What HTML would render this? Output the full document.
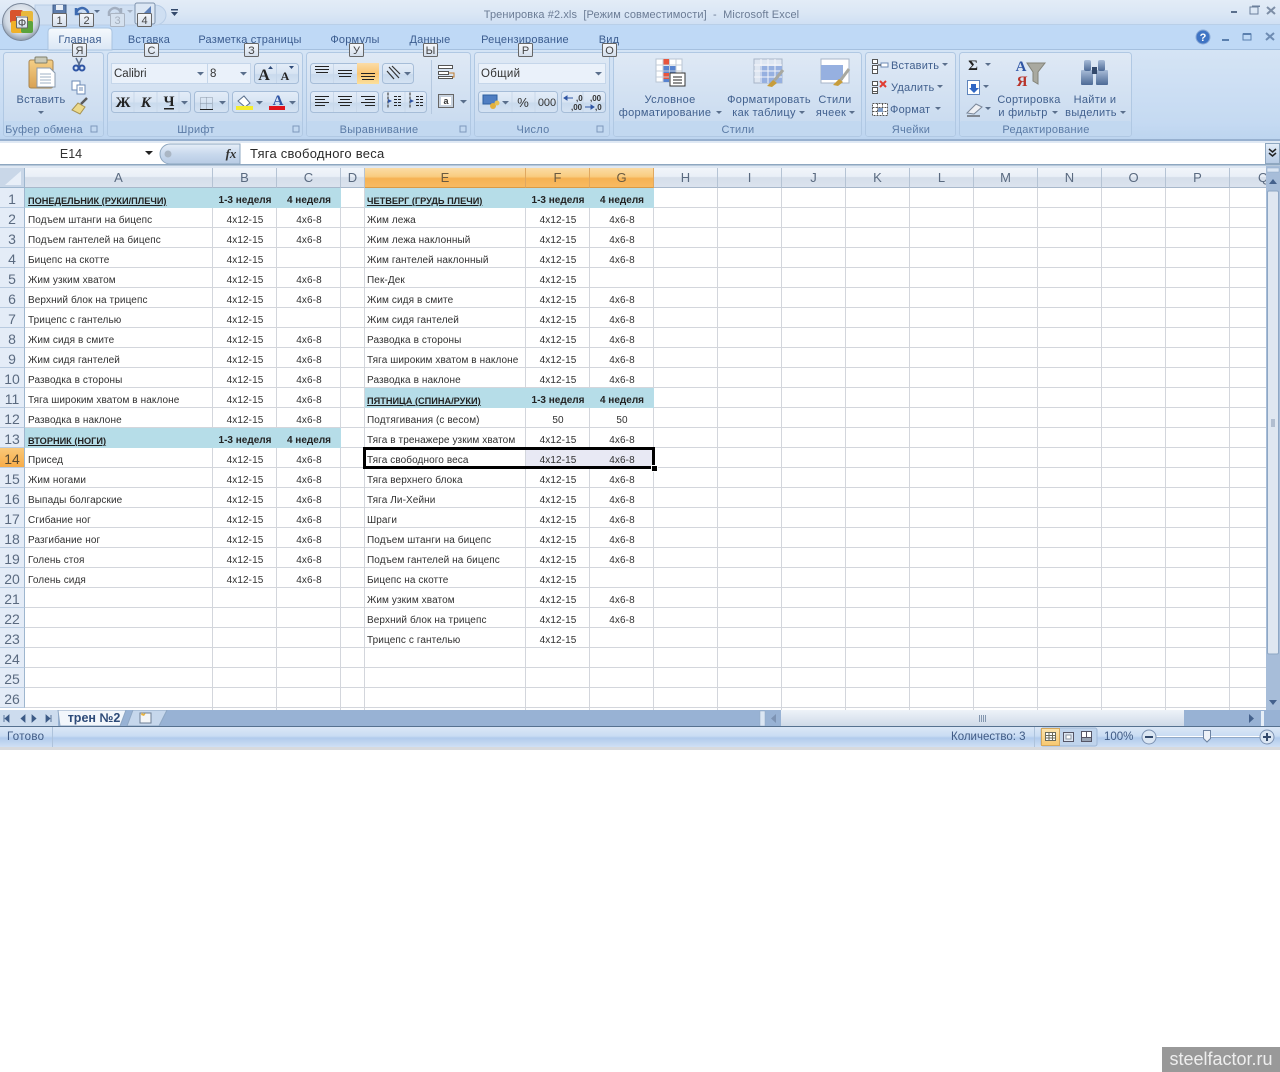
<!DOCTYPE html>
<html lang="ru"><head><meta charset="utf-8"><title>Тренировка #2.xls</title>
<style>
html,body{margin:0;padding:0;background:#fff;width:1280px;height:1072px;overflow:hidden;font-family:"Liberation Sans",sans-serif}
#rib{position:absolute;left:0;top:0}
#rib text{font-family:"Liberation Sans",sans-serif;font-size:11px;fill:#3a5683}
#rib .c{text-anchor:middle}
#rib .cap{font-size:11px;fill:#5b7ba6;text-anchor:middle;letter-spacing:.25px}
#rib .tab{font-size:11px;fill:#3b5c8f;text-anchor:middle;letter-spacing:.2px}
#rib .lab{font-size:11px;fill:#41608e;text-anchor:middle;letter-spacing:.3px}
#rib .k{font-size:11px;fill:#444;text-anchor:middle}
#rib .b{font-family:"Liberation Serif",serif;font-weight:bold;font-size:15px;fill:#222;text-anchor:middle}
.abs{position:absolute}
#grid{position:absolute;left:25px;top:188px;width:1241px;height:522px;background:#fff;overflow:hidden}
.v{position:absolute;top:0;bottom:0;width:1px;background:#d3d6dc}
.hl{position:absolute;left:0;right:0;top:0;bottom:0;background:repeating-linear-gradient(to bottom,transparent 0,transparent 19px,#d3d6dc 19px,#d3d6dc 20px)}
table{position:absolute;left:0;top:0;border-collapse:separate;border-spacing:0;table-layout:fixed;width:629px}
td{height:14px;padding:6px 0 0;font-size:10px;line-height:14px;letter-spacing:.1px;color:#303030;white-space:nowrap;overflow:visible;text-align:center}
td:nth-child(1){text-align:left;padding-left:3px}
td:nth-child(5){text-align:left;padding-left:2px}
td.h{background:#b6dde8;font-weight:bold;color:#222;letter-spacing:0}
td.u{text-decoration:underline;font-size:9.2px}
td.s{background:#e8e9f4}
.ch{position:absolute;top:168px;height:20px;line-height:20px;text-align:center;font-size:13px;color:#5a6a80;background:linear-gradient(#f1f5fa,#e9eff7 45%,#d5deea 50%,#dbe3ee);border-right:1px solid #b5c3d4;border-bottom:1px solid #a8b8cb;overflow:hidden;box-sizing:border-box}
.ch.o{background:linear-gradient(#fbdca6,#f9cc80 45%,#f6b253 55%,#f8ba62);color:#6a5a40;border-right-color:#e0a860;border-bottom-color:#d99a46}
.rh{position:absolute;left:0;width:25px;height:20px;margin-top:-1px;line-height:22px;text-align:center;font-size:14px;color:#5a6a80;background:#e4ecf7;border-right:1px solid #9eb6ce;border-bottom:1px solid #b9cbe0;box-sizing:border-box}
.rh.o{background:linear-gradient(#f9c878,#f7ac48);color:#5a4a30}
#sel{position:absolute;left:363px;top:447px;width:286px;height:16px;border:3px solid #000;pointer-events:none}
#han{position:absolute;left:651px;top:465px;width:5px;height:5px;background:#000;border:1px solid #fff}
#wm{position:absolute;left:1162px;top:1047px;width:118px;height:25px;background:#999;color:#eee;font-size:18px;line-height:25px;text-align:center}
</style></head><body>

<svg id="rib" width="1280" height="168" viewBox="0 0 1280 168" xmlns="http://www.w3.org/2000/svg">
<defs>
<linearGradient id="gT" x1="0" y1="0" x2="0" y2="1"><stop offset="0" stop-color="#e3ecf7"/><stop offset=".5" stop-color="#dbe7f5"/><stop offset="1" stop-color="#cfdff3"/></linearGradient>
<linearGradient id="gP" x1="0" y1="0" x2="0" y2="1"><stop offset="0" stop-color="#d5e4f5"/><stop offset=".8" stop-color="#c5daf2"/><stop offset="1" stop-color="#bcd4ef"/></linearGradient>
<linearGradient id="gG" x1="0" y1="0" x2="0" y2="1"><stop offset="0" stop-color="#dfe9f5"/><stop offset=".8" stop-color="#cbdcf0"/><stop offset="1" stop-color="#c4d8ef"/></linearGradient>
<linearGradient id="gB" x1="0" y1="0" x2="0" y2="1"><stop offset="0" stop-color="#e4edf8"/><stop offset=".5" stop-color="#d7e4f3"/><stop offset=".55" stop-color="#c9daed"/><stop offset="1" stop-color="#d5e3f3"/></linearGradient>
<linearGradient id="gTab" x1="0" y1="0" x2="0" y2="1"><stop offset="0" stop-color="#f5f9fd"/><stop offset="1" stop-color="#dbe7f5"/></linearGradient>
<linearGradient id="gO" x1="0" y1="0" x2="0" y2="1"><stop offset="0" stop-color="#fbdca8"/><stop offset=".5" stop-color="#f9c673"/><stop offset="1" stop-color="#fbdf9c"/></linearGradient>
<linearGradient id="gK" x1="0" y1="0" x2="0" y2="1"><stop offset="0" stop-color="#f6f8fb"/><stop offset="1" stop-color="#d3deec"/></linearGradient>
<linearGradient id="gF" x1="0" y1="0" x2="0" y2="1"><stop offset="0" stop-color="#e6eef8"/><stop offset=".5" stop-color="#c9d9ed"/><stop offset="1" stop-color="#b7cbe4"/></linearGradient>
<radialGradient id="gOff" cx=".5" cy=".4" r=".6"><stop offset="0" stop-color="#fbfcfd"/><stop offset=".7" stop-color="#cfd8e3"/><stop offset="1" stop-color="#8c99aa"/></radialGradient>
<linearGradient id="gClip" x1="0" y1="0" x2="0" y2="1"><stop offset="0" stop-color="#f5cf86"/><stop offset="1" stop-color="#d9a153"/></linearGradient>
<linearGradient id="gBin" x1="0" y1="0" x2="0" y2="1"><stop offset="0" stop-color="#a8bcd8"/><stop offset="1" stop-color="#4d6a96"/></linearGradient>
</defs>

<!-- title bar + ribbon background -->
<rect width="1280" height="25" fill="url(#gT)"/>
<rect y="24" width="1280" height="1" fill="#b9cfe8"/>
<rect y="25" width="1280" height="25" fill="#bfd9f6"/>
<rect y="49" width="1280" height="92" fill="url(#gP)"/>
<rect y="49" width="1280" height="1" fill="#a5c0df"/>
<rect y="139" width="1280" height="2" fill="#97b0cf"/>
<rect y="141" width="1280" height="2" fill="#e0e9f4"/>

<!-- formula bar -->
<rect y="143" width="1280" height="21" fill="#fff"/>
<rect y="164" width="1280" height="1.5" fill="#8ea7c0"/>
<rect y="165.5" width="1280" height="2.5" fill="#dfe8f3"/>
<text x="71" y="158" class="c" style="font-size:12.5px;fill:#333">E14</text>
<path d="M145 151h8l-4 4z" fill="#222"/>
<path d="M170 144h70v20h-70a10 10 0 0 1 0-20z" fill="url(#gF)" stroke="#8ea7c0"/>
<circle cx="168" cy="154" r="3.5" fill="#aab6c4"/>
<text x="231" y="158" class="c" style="font-family:'Liberation Serif',serif;font-style:italic;font-size:13px;fill:#333;font-weight:bold">fx</text>
<text x="250" y="158" style="font-size:13px;fill:#2a2a2a;letter-spacing:.25px">Тяга свободного веса</text>
<rect x="1265.5" y="143.5" width="14" height="20" fill="url(#gF)" stroke="#8ea7c0"/>
<path d="M1269 149l3.5 3 3.5-3M1269 153l3.500 3 3.500-3" fill="none" stroke="#222" stroke-width="1.500"/>

<!-- title -->
<text x="641.500" y="18" class="c" xml:space="preserve" style="font-size:11px;fill:#6b7c95;white-space:pre;letter-spacing:.1px">Тренировка #2.xls  [Режим совместимости]  -  Microsoft Excel</text>
<rect x="1231" y="11" width="6" height="2" fill="#5a6f8c"/>
<rect x="1250" y="7" width="8" height="7" fill="none" stroke="#6b7f9b"/><rect x="1252" y="5.500" width="8" height="1.500" fill="#6b7f9b"/>
<path d="M1267 7l8 7M1275 7l-8 7" stroke="#7d8ea6" stroke-width="2"/>

<!-- QAT -->
<path d="M35 5h120a11 10 0 0 1 0 20H35z" fill="#cfdff2" stroke="#b8cde6"/>
<rect x="53" y="5" width="13" height="12" fill="#5d7cab" stroke="#3e5c8a"/><rect x="56" y="5" width="7" height="5" fill="#e8eef6"/>
<path d="M76 14c1-7 9-8 12-2v4M76 8v6h6" fill="none" stroke="#3d6ab0" stroke-width="2.500"/>
<path d="M94 10l3 3 3-3z" fill="#5a6f8c"/>
<path d="M121 14c-1-7-9-8-12-2v4M121 8v6h-6" fill="none" stroke="#a3afc0" stroke-width="2.500"/>
<path d="M127 10l3 3 3-3z" fill="#a3afc0"/>
<rect x="135" y="3" width="20" height="21" rx="2" fill="#dce7f4" stroke="#7e93ad"/>
<path d="M139 18l12-12v12z" fill="#5d80b8"/>
<path d="M171 9h7v1.500h-7zM171 12h7l-3.500 4z" fill="#33496b"/>

<!-- office button -->
<circle cx="21" cy="22" r="18.500" fill="url(#gOff)" stroke="#7a8799"/>
<rect x="10" y="10" width="13" height="13" rx="2" fill="#d8542c"/>
<rect x="21" y="11" width="12" height="12" rx="2" fill="#e8b83c"/>
<rect x="11" y="21" width="12" height="12" rx="2" fill="#f0b12a"/>
<rect x="21" y="21" width="12" height="12" rx="2" fill="#5ba33c"/>
<rect x="16" y="16" width="11" height="11" fill="#f4f6f8" opacity=".95"/>

<!-- tabs -->
<path d="M48 50V32q0-4 4-4h56q4 0 4 4v18z" fill="url(#gTab)" stroke="#a9c3e0"/>
<text x="80" y="43" class="tab">Главная</text>
<text x="149" y="43" class="tab">Вставка</text>
<text x="250" y="43" class="tab">Разметка страницы</text>
<text x="355" y="43" class="tab">Формулы</text>
<text x="430" y="43" class="tab">Данные</text>
<text x="525" y="43" class="tab">Рецензирование</text>
<text x="609" y="43" class="tab">Вид</text>

<!-- right help / window -->
<circle cx="1203" cy="37" r="7" fill="#3f74c4" stroke="#8aa9d6"/><text x="1203" y="41" class="c" style="font-size:11px;font-weight:bold;fill:#fff">?</text>
<rect x="1222" y="39" width="7" height="2" fill="#5a7fae"/>
<rect x="1243" y="34" width="8" height="6" fill="none" stroke="#5a7fae"/><rect x="1243" y="33" width="8" height="2" fill="#5a7fae"/>
<path d="M1266 33l8 7M1274 33l-8 7" stroke="#6e8cb3" stroke-width="2"/>

<!-- groups -->
<g stroke="#b0c8e3" stroke-width="1">
<rect x="3.500" y="52.500" width="100" height="84" rx="3" fill="url(#gG)"/>
<rect x="107.500" y="52.500" width="195" height="84" rx="3" fill="url(#gG)"/>
<rect x="306.500" y="52.500" width="164" height="84" rx="3" fill="url(#gG)"/>
<rect x="474.500" y="52.500" width="135" height="84" rx="3" fill="url(#gG)"/>
<rect x="613.500" y="52.500" width="248" height="84" rx="3" fill="url(#gG)"/>
<rect x="865.500" y="52.500" width="90" height="84" rx="3" fill="url(#gG)"/>
<rect x="959.500" y="52.500" width="172" height="84" rx="3" fill="url(#gG)"/>
</g>
<g fill="#c2d8f0">
<rect x="4" y="121" width="99" height="15" rx="2"/><rect x="108" y="121" width="194" height="15" rx="2"/><rect x="307" y="121" width="163" height="15" rx="2"/><rect x="475" y="121" width="134" height="15" rx="2"/><rect x="614" y="121" width="247" height="15" rx="2"/><rect x="866" y="121" width="89" height="15" rx="2"/><rect x="960" y="121" width="171" height="15" rx="2"/>
</g>
<text x="44" y="133" class="cap">Буфер обмена</text>
<text x="196" y="133" class="cap">Шрифт</text>
<text x="379" y="133" class="cap">Выравнивание</text>
<text x="533" y="133" class="cap">Число</text>
<text x="738" y="133" class="cap">Стили</text>
<text x="911" y="133" class="cap">Ячейки</text>
<text x="1046" y="133" class="cap">Редактирование</text>
<g fill="none" stroke="#7d98bb"><path d="M91 126h6v6h-6zM293 126h6v6h-6zM460 126h6v6h-6zM597 126h6v6h-6z"/></g>

<!-- clipboard -->
<rect x="29" y="60" width="24" height="28" rx="2" fill="url(#gClip)" stroke="#a78550"/>
<rect x="35" y="57" width="12" height="6" rx="1" fill="#c9c9b8" stroke="#7e7e6a"/>
<path d="M37 68h13l5 5v14H37z" fill="#fff" stroke="#8899ad"/>
<path d="M40 74h11M40 77h11M40 80h11M40 83h11" stroke="#9fb0c4"/>
<text x="41" y="103" class="lab">Вставить</text>
<path d="M38 111h6l-3 3z" fill="#5a6f8c"/>
<path d="M76 58l4 8M82 58l-4 8" stroke="#5b6e8c" stroke-width="1.500"/>
<circle cx="76" cy="68" r="2.500" fill="none" stroke="#2f55a4" stroke-width="2"/><circle cx="82" cy="68" r="2.500" fill="none" stroke="#2f55a4" stroke-width="2"/>
<rect x="72" y="81" width="8" height="9" fill="#fff" stroke="#6e8bb5"/><rect x="77" y="85" width="8" height="9" fill="#fff" stroke="#6e8bb5"/>
<path d="M79 88h4M79 90h4" stroke="#6e8bb5"/>
<path d="M72 110l6-7 7 4-5 7z" fill="#ecd98a" stroke="#a69250"/><path d="M81 104l6-6" stroke="#5a5a5a" stroke-width="2.500"/>

<!-- font group -->
<rect x="111.500" y="63.500" width="96" height="20" fill="#eaf1fa" stroke="#c5d6ea"/>
<rect x="207.500" y="63.500" width="43" height="20" fill="#eaf1fa" stroke="#c5d6ea"/>
<text x="114" y="77" style="font-size:11.500px;fill:#333">Calibri</text>
<text x="210" y="77" style="font-size:11.500px;fill:#333">8</text>
<path d="M197 72h7l-3.500 3.500zM240 72h7l-3.500 3.500z" fill="#5a6f8c"/>
<rect x="254.500" y="63.500" width="44" height="20" rx="3" fill="url(#gB)" stroke="#a6bdd8"/><path d="M276.500 64v19" stroke="#c5d6ea"/>
<text x="264" y="80" class="b" style="font-size:16px">A</text><text x="285" y="80" class="b" style="font-size:12px">A</text>
<path d="M268 69l2.500-3 2.500 3zM289 66l2.500 3 2.500-3z" fill="#2e4a78"/>
<rect x="111.500" y="91.500" width="79" height="21" rx="3" fill="url(#gB)" stroke="#a6bdd8"/><path d="M134 92v20M157 92v20M179 92v20" stroke="#c9d8ea"/>
<text x="123" y="107" class="b">Ж</text><text x="146" y="107" class="b" style="font-style:italic">К</text><text x="169" y="106" class="b">Ч</text><rect x="164" y="108" width="10" height="1.500" fill="#222"/>
<path d="M181 101h7l-3.500 3.500z" fill="#5a6f8c"/>
<rect x="194.500" y="91.500" width="34" height="21" rx="3" fill="url(#gB)" stroke="#a6bdd8"/>
<path d="M200.500 97.500h12v12h-12zM206.500 97.500v12M200.500 103.500h12" fill="none" stroke="#8b97a8" stroke-dasharray="1 1"/><path d="M200 109.500h13" stroke="#222"/>
<path d="M219 101h7l-3.500 3.500z" fill="#5a6f8c"/>
<rect x="232.500" y="91.500" width="66" height="21" rx="3" fill="url(#gB)" stroke="#a6bdd8"/>
<path d="M238 101l6-5 6 7-5 4z" fill="#fff" stroke="#5a6f8c"/><rect x="236" y="106" width="17" height="4" fill="#f4ec2e"/>
<path d="M256 101h7l-3.500 3.500z" fill="#5a6f8c"/>
<text x="278" y="105" class="b" style="font-size:15px;fill:#2f55a4">A</text><rect x="269" y="106" width="16" height="4" fill="#e0141c"/>
<path d="M289 101h7l-3.500 3.500z" fill="#5a6f8c"/>

<!-- alignment -->
<rect x="310.500" y="63.500" width="68" height="20" rx="3" fill="url(#gB)" stroke="#a6bdd8"/>
<rect x="357" y="63" width="22" height="21" fill="url(#gO)"/>
<path d="M333.500 64v19" stroke="#c9d8ea"/>
<path d="M315 66.500h14M315 69.500h14M316 72.500h12M338 70.500h14M338 73.500h14M339 76.500h12M361 73.500h14M361 76.500h14M362 79.500h12" stroke="#222"/>
<rect x="382.500" y="63.500" width="31" height="20" rx="3" fill="url(#gB)" stroke="#a6bdd8"/>
<path d="M389 67l10 11M392 66l8 8M387 71l7 8" stroke="#333" stroke-width="1.200"/>
<path d="M404 72h7l-3.500 3.500z" fill="#5a6f8c"/>
<rect x="310.500" y="91.500" width="68" height="21" rx="3" fill="url(#gB)" stroke="#a6bdd8"/><path d="M333.500 92v20M356.500 92v20" stroke="#c9d8ea"/>
<path d="M315 96.500h14M315 99.500h10M315 102.500h14M315 105.500h10M338 96.500h14M340 99.500h10M338 102.500h14M340 105.500h10M361 96.500h14M365 99.500h10M361 102.500h14M365 105.500h10" stroke="#222"/>
<rect x="382.500" y="91.500" width="44" height="21" rx="3" fill="url(#gB)" stroke="#a6bdd8"/><path d="M405 92v20" stroke="#c9d8ea"/>
<path d="M394 96.500h8M394 99.500h8M394 102.500h8M394 105.500h8M388 92.500v16M416 96.500h8M416 99.500h8M416 102.500h8M416 105.500h8M410 92.500v16" stroke="#222" stroke-dasharray="3 1"/>
<path d="M392 101l-4-2v4zM410 99v4l4-2z" fill="#2f55a4"/>
<path d="M431.500 60v54" stroke="#b5c8df"/>
<rect x="438.500" y="65.500" width="14" height="3" fill="#fff" stroke="#555"/><rect x="438.500" y="71.500" width="10" height="3" fill="#fff" stroke="#555"/><rect x="438.500" y="76.500" width="14" height="2" fill="#fff" stroke="#555"/>
<path d="M449 73h5v4l-2 0" fill="none" stroke="#c07a2c"/>
<rect x="438.500" y="94.500" width="15" height="13" fill="#c9d3df" stroke="#666"/><rect x="441" y="97" width="10" height="8" fill="#fff"/><text x="446" y="104" class="c" style="font-size:9px;font-weight:bold;fill:#333">a</text>
<path d="M460 100h7l-3.500 3.500z" fill="#5a6f8c"/>

<!-- number -->
<rect x="478.500" y="63.500" width="127" height="20" fill="#eaf1fa" stroke="#c5d6ea"/>
<text x="481" y="77" style="font-size:11.500px;fill:#333;letter-spacing:.3px">Общий</text>
<path d="M595 72h7l-3.500 3.500z" fill="#5a6f8c"/>
<rect x="478.500" y="91.500" width="79" height="21" rx="3" fill="url(#gB)" stroke="#a6bdd8"/><path d="M512 92v20M535 92v20" stroke="#c9d8ea"/>
<rect x="483" y="95" width="14" height="9" fill="#4f7ec2" stroke="#2c5fa0"/><circle cx="493" cy="106" r="3" fill="#e2b03c"/><circle cx="497" cy="103" r="2.500" fill="#e8c254"/>
<path d="M502 101h7l-3.500 3.500z" fill="#5a6f8c"/>
<text x="523" y="107" class="c" style="font-size:13px;fill:#333">%</text>
<text x="547" y="106" class="c" style="font-size:11px;fill:#333">000</text>
<rect x="561.500" y="91.500" width="44" height="21" rx="3" fill="url(#gB)" stroke="#a6bdd8"/><path d="M583 92v20" stroke="#c9d8ea"/>
<text x="576" y="101" style="font-size:8px;fill:#333;font-weight:bold">,0</text><text x="571" y="110" style="font-size:8px;fill:#333;font-weight:bold">,00</text>
<path d="M564 98h9M564 98l3-2v4z" stroke="#2f55a4" fill="#2f55a4"/>
<text x="590" y="101" style="font-size:8px;fill:#333;font-weight:bold">,00</text><text x="595" y="110" style="font-size:8px;fill:#333;font-weight:bold">,0</text>
<path d="M585 107h9M594 107l-3-2v4z" stroke="#2f55a4" fill="#2f55a4"/>

<!-- styles -->
<g stroke="#b9c5d3" fill="#fff">
<rect x="656" y="59" width="26" height="23"/></g>
<rect x="663" y="59" width="7" height="6" fill="#e8553d"/><rect x="663" y="66" width="13" height="7" fill="#5884d0"/><rect x="663" y="73" width="7" height="6" fill="#e8553d"/><rect x="663" y="79" width="7" height="3" fill="#5884d0"/>
<path d="M656 65h26M656 71h26M656 77h26M663 59v23M669.500 59v23M676 59v23" stroke="#c3ccd8" fill="none"/>
<rect x="670" y="73" width="15" height="13" fill="#fff" stroke="#333"/>
<path d="M673 77h9M673 80h9M673 83h9" stroke="#222"/>
<rect x="754" y="59" width="28" height="24" fill="#dfe7f2" stroke="#a8b6c8"/>
<rect x="760" y="66" width="22" height="17" fill="#96b0e0"/>
<path d="M754 65h28M754 71h28M754 77h28M761 59v24M768 59v24M775 59v24" stroke="#f4f6fa"/>
<path d="M783 70l-9 11" stroke="#a8a8a0" stroke-width="3"/><path d="M773 80l-6 6 5 1 5-4z" fill="#c79d3c"/>
<rect x="821" y="59" width="28" height="24" fill="#fff" stroke="#a8b6c8"/>
<rect x="821" y="65" width="22" height="15" fill="#96b0e0"/>
<path d="M849 69l-9 12" stroke="#a8a8a0" stroke-width="3"/><path d="M839 79l-6 6 5 1 5-4z" fill="#c79d3c"/>
<text x="670" y="103" class="lab">Условное</text>
<text x="665" y="116" class="lab">форматирование</text><path d="M716 111h6l-3 3z" fill="#5a6f8c"/>
<text x="769" y="103" class="lab">Форматировать</text>
<text x="764" y="116" class="lab">как таблицу</text><path d="M799 111h6l-3 3z" fill="#5a6f8c"/>
<text x="835" y="103" class="lab">Стили</text>
<text x="831" y="116" class="lab">ячеек</text><path d="M849 111h6l-3 3z" fill="#5a6f8c"/>

<!-- cells -->
<path d="M872.500 59.500h5v4h-5zM872.500 65.500h5v4h-5zM872.500 69.500h5v4h-5z" fill="#fff" stroke="#555"/><rect x="881" y="63" width="7" height="4" fill="#fff" stroke="#6e8bb5"/><path d="M878 65h3" stroke="#333"/>
<text x="891" y="69" style="font-size:11px;fill:#41608e;letter-spacing:.2px">Вставить</text><path d="M942 63h6l-3 3z" fill="#5a6f8c"/>
<path d="M872.500 81.500h5v4h-5zM872.500 87.500h5v4h-5zM872.500 91.500h5v2h-5z" fill="#fff" stroke="#555"/><path d="M880 81l6 6M886 81l-6 6" stroke="#e03c32" stroke-width="2"/>
<text x="891" y="91" style="font-size:11px;fill:#41608e;letter-spacing:.2px">Удалить</text><path d="M937 85h6l-3 3z" fill="#5a6f8c"/>
<path d="M872.500 103.500h15v12h-15zM877.500 103.500v12M882.500 103.500v12M872.500 107.500h15M872.500 111.500h15" fill="#fff" stroke="#555" stroke-dasharray="2 1"/><rect x="878" y="108" width="5" height="4" fill="#7d9bc7"/>
<text x="890" y="113" style="font-size:11px;fill:#41608e;letter-spacing:.2px">Формат</text><path d="M935 107h6l-3 3z" fill="#5a6f8c"/>

<!-- editing -->
<text x="973" y="70" class="b" style="font-size:15px">Σ</text><path d="M985 63h6l-3 3z" fill="#5a6f8c"/>
<rect x="967.500" y="80.500" width="12" height="14" fill="#fff" stroke="#5e84bc"/><path d="M971 84h5v4h3l-5 5-5-5h2z" fill="#2f66c4"/>
<path d="M983 85h6l-3 3z" fill="#5a6f8c"/>
<path d="M967 113l9-9 6 3-8 7z" fill="#eef0f4" stroke="#7a8799"/><path d="M967 116h13" stroke="#333"/>
<path d="M985 107h6l-3 3z" fill="#5a6f8c"/>
<path d="M1027 63h18l-7 9v12l-5-3v-9z" fill="#a9a9a0" stroke="#838378"/>
<text x="1021" y="71" class="c" style="font-family:'Liberation Serif',serif;font-weight:bold;font-size:15px;fill:#2f55a4">A</text>
<text x="1022" y="86" class="c" style="font-family:'Liberation Serif',serif;font-weight:bold;font-size:15px;fill:#b8342a">Я</text>
<rect x="1081" y="70" width="12" height="15" rx="1" fill="url(#gBin)"/><rect x="1096" y="70" width="12" height="15" rx="1" fill="url(#gBin)"/>
<rect x="1084" y="60" width="7" height="11" rx="2" fill="url(#gBin)"/><rect x="1098" y="60" width="7" height="11" rx="2" fill="url(#gBin)"/><rect x="1092" y="67" width="5" height="7" fill="#33496b"/>
<text x="1029" y="103" class="lab">Сортировка</text>
<text x="1023" y="116" class="lab">и фильтр</text><path d="M1052 111h6l-3 3z" fill="#5a6f8c"/>
<text x="1095" y="103" class="lab">Найти и</text>
<text x="1091" y="116" class="lab">выделить</text><path d="M1120 111h6l-3 3z" fill="#5a6f8c"/>

<!-- key tips -->
<g fill="url(#gK)" stroke="#666">
<rect x="52.500" y="13.500" width="14" height="13" rx="1"/><rect x="79.500" y="13.500" width="14" height="13" rx="1"/><rect x="137.500" y="13.500" width="14" height="13" rx="1"/>
<rect x="72.500" y="43.500" width="14" height="13" rx="1"/><rect x="144.500" y="43.500" width="14" height="13" rx="1"/><rect x="244.500" y="43.500" width="14" height="13" rx="1"/><rect x="349.500" y="43.500" width="14" height="13" rx="1"/><rect x="423.500" y="43.500" width="14" height="13" rx="1"/><rect x="518.500" y="43.500" width="14" height="13" rx="1"/><rect x="602.500" y="43.500" width="14" height="13" rx="1"/>
<rect x="16.500" y="17" width="11" height="11" rx="1"/>
</g>
<rect x="110.500" y="13.500" width="14" height="13" rx="1" fill="#d5e1ef" stroke="#aab4c2"/>
<text x="59.500" y="24" class="k">1</text><text x="86.500" y="24" class="k">2</text><text x="117.500" y="24" class="k" style="fill:#a5afbd">3</text><text x="144.500" y="24" class="k">4</text>
<text x="79.500" y="54" class="k">Я</text><text x="151.500" y="54" class="k">С</text><text x="251.500" y="54" class="k">З</text><text x="356.500" y="54" class="k">У</text><text x="430.500" y="54" class="k">Ы</text><text x="525.500" y="54" class="k">Р</text><text x="609.500" y="54" class="k">О</text>
<text x="22" y="26.500" class="k">Ф</text>
</svg>

<!-- column headers -->
<div class="abs" style="left:0;top:168px;width:25px;height:20px;background:#c9d7e8;border-right:1px solid #9eb6ce;border-bottom:1px solid #9eb6ce;box-sizing:border-box"><svg width="24" height="19" style="display:block"><path d="M21 3v14H5z" fill="#e8eff8"/></svg></div>
<div class="ch" style="left:25px;width:188px">A</div>
<div class="ch" style="left:213px;width:64px">B</div>
<div class="ch" style="left:277px;width:64px">C</div>
<div class="ch" style="left:341px;width:24px">D</div>
<div class="ch o" style="left:365px;width:161px">E</div>
<div class="ch o" style="left:526px;width:64px">F</div>
<div class="ch o" style="left:590px;width:64px">G</div>
<div class="ch" style="left:654px;width:64px">H</div>
<div class="ch" style="left:718px;width:64px">I</div>
<div class="ch" style="left:782px;width:64px">J</div>
<div class="ch" style="left:846px;width:64px">K</div>
<div class="ch" style="left:910px;width:64px">L</div>
<div class="ch" style="left:974px;width:64px">M</div>
<div class="ch" style="left:1038px;width:64px">N</div>
<div class="ch" style="left:1102px;width:64px">O</div>
<div class="ch" style="left:1166px;width:64px">P</div>
<div class="ch" style="left:1230px;width:36px;text-align:left;padding-left:28px;border-right:0">Q</div>

<!-- row headers -->
<div class="rh" style="top:189px">1</div><div class="rh" style="top:209px">2</div><div class="rh" style="top:229px">3</div><div class="rh" style="top:249px">4</div><div class="rh" style="top:269px">5</div><div class="rh" style="top:289px">6</div><div class="rh" style="top:309px">7</div><div class="rh" style="top:329px">8</div><div class="rh" style="top:349px">9</div><div class="rh" style="top:369px">10</div><div class="rh" style="top:389px">11</div><div class="rh" style="top:409px">12</div><div class="rh" style="top:429px">13</div><div class="rh o" style="top:449px">14</div><div class="rh" style="top:469px">15</div><div class="rh" style="top:489px">16</div><div class="rh" style="top:509px">17</div><div class="rh" style="top:529px">18</div><div class="rh" style="top:549px">19</div><div class="rh" style="top:569px">20</div><div class="rh" style="top:589px">21</div><div class="rh" style="top:609px">22</div><div class="rh" style="top:629px">23</div><div class="rh" style="top:649px">24</div><div class="rh" style="top:669px">25</div><div class="rh" style="top:689px">26</div>

<!-- sheet grid -->
<div id="grid">
<div class="hl"></div>
<div class="v" style="left:187px"></div><div class="v" style="left:251px"></div><div class="v" style="left:315px"></div><div class="v" style="left:339px"></div><div class="v" style="left:500px"></div><div class="v" style="left:564px"></div><div class="v" style="left:628px"></div><div class="v" style="left:692px"></div><div class="v" style="left:756px"></div><div class="v" style="left:820px"></div><div class="v" style="left:884px"></div><div class="v" style="left:948px"></div><div class="v" style="left:1012px"></div><div class="v" style="left:1076px"></div><div class="v" style="left:1140px"></div><div class="v" style="left:1204px"></div>
<table>
<colgroup><col style="width:188px"><col style="width:64px"><col style="width:64px"><col style="width:24px"><col style="width:161px"><col style="width:64px"><col style="width:64px"></colgroup>
<tr><td class="h u">ПОНЕДЕЛЬНИК (РУКИ/ПЛЕЧИ)</td><td class="h">1-3 неделя</td><td class="h">4 неделя</td><td></td><td class="h u">ЧЕТВЕРГ (ГРУДЬ ПЛЕЧИ)</td><td class="h">1-3 неделя</td><td class="h">4 неделя</td></tr>
<tr><td>Подъем штанги на бицепс</td><td>4х12-15</td><td>4х6-8</td><td></td><td>Жим лежа</td><td>4х12-15</td><td>4х6-8</td></tr>
<tr><td>Подъем гантелей на бицепс</td><td>4х12-15</td><td>4х6-8</td><td></td><td>Жим лежа наклонный</td><td>4х12-15</td><td>4х6-8</td></tr>
<tr><td>Бицепс на скотте</td><td>4х12-15</td><td></td><td></td><td>Жим гантелей наклонный</td><td>4х12-15</td><td>4х6-8</td></tr>
<tr><td>Жим узким хватом</td><td>4х12-15</td><td>4х6-8</td><td></td><td>Пек-Дек</td><td>4х12-15</td><td></td></tr>
<tr><td>Верхний блок на трицепс</td><td>4х12-15</td><td>4х6-8</td><td></td><td>Жим сидя в смите</td><td>4х12-15</td><td>4х6-8</td></tr>
<tr><td>Трицепс с гантелью</td><td>4х12-15</td><td></td><td></td><td>Жим сидя гантелей</td><td>4х12-15</td><td>4х6-8</td></tr>
<tr><td>Жим сидя в смите</td><td>4х12-15</td><td>4х6-8</td><td></td><td>Разводка в стороны</td><td>4х12-15</td><td>4х6-8</td></tr>
<tr><td>Жим сидя гантелей</td><td>4х12-15</td><td>4х6-8</td><td></td><td>Тяга широким хватом в наклоне</td><td>4х12-15</td><td>4х6-8</td></tr>
<tr><td>Разводка в стороны</td><td>4х12-15</td><td>4х6-8</td><td></td><td>Разводка в наклоне</td><td>4х12-15</td><td>4х6-8</td></tr>
<tr><td>Тяга широким хватом в наклоне</td><td>4х12-15</td><td>4х6-8</td><td></td><td class="h u">ПЯТНИЦА (СПИНА/РУКИ)</td><td class="h">1-3 неделя</td><td class="h">4 неделя</td></tr>
<tr><td>Разводка в наклоне</td><td>4х12-15</td><td>4х6-8</td><td></td><td>Подтягивания (с весом)</td><td>50</td><td>50</td></tr>
<tr><td class="h u">ВТОРНИК (НОГИ)</td><td class="h">1-3 неделя</td><td class="h">4 неделя</td><td></td><td>Тяга в тренажере узким хватом</td><td>4х12-15</td><td>4х6-8</td></tr>
<tr><td>Присед</td><td>4х12-15</td><td>4х6-8</td><td></td><td>Тяга свободного веса</td><td class="s">4х12-15</td><td class="s">4х6-8</td></tr>
<tr><td>Жим ногами</td><td>4х12-15</td><td>4х6-8</td><td></td><td>Тяга верхнего блока</td><td>4х12-15</td><td>4х6-8</td></tr>
<tr><td>Выпады болгарские</td><td>4х12-15</td><td>4х6-8</td><td></td><td>Тяга Ли-Хейни</td><td>4х12-15</td><td>4х6-8</td></tr>
<tr><td>Сгибание ног</td><td>4х12-15</td><td>4х6-8</td><td></td><td>Шраги</td><td>4х12-15</td><td>4х6-8</td></tr>
<tr><td>Разгибание ног</td><td>4х12-15</td><td>4х6-8</td><td></td><td>Подъем штанги на бицепс</td><td>4х12-15</td><td>4х6-8</td></tr>
<tr><td>Голень стоя</td><td>4х12-15</td><td>4х6-8</td><td></td><td>Подъем гантелей на бицепс</td><td>4х12-15</td><td>4х6-8</td></tr>
<tr><td>Голень сидя</td><td>4х12-15</td><td>4х6-8</td><td></td><td>Бицепс на скотте</td><td>4х12-15</td><td></td></tr>
<tr><td></td><td></td><td></td><td></td><td>Жим узким хватом</td><td>4х12-15</td><td>4х6-8</td></tr>
<tr><td></td><td></td><td></td><td></td><td>Верхний блок на трицепс</td><td>4х12-15</td><td>4х6-8</td></tr>
<tr><td></td><td></td><td></td><td></td><td>Трицепс с гантелью</td><td>4х12-15</td><td></td></tr>
</table>
</div>
<div id="sel"></div><div id="han"></div>

<!-- vertical scrollbar -->
<svg class="abs" style="left:1266px;top:166px" width="14" height="546" xmlns="http://www.w3.org/2000/svg">
<rect width="14" height="546" fill="#a7bdd9"/>
<rect x="1" y="2" width="12" height="4" fill="#dbe6f3" stroke="#8ea7c4" stroke-width=".5"/>
<path d="M3 18l4-5 4 5z" fill="#44618c"/>
<rect x="1.500" y="25" width="11" height="463" rx="1.500" fill="#dfe7f1" stroke="#8ea7c4"/>
<path d="M5 254h4M5 256h4M5 258h4M5 260h4" stroke="#8396ae"/>
<path d="M3 534l4 5 4-5z" fill="#44618c"/>
</svg>

<!-- sheet tabs bar -->
<svg class="abs" style="left:0;top:710px" width="1280" height="17" xmlns="http://www.w3.org/2000/svg">
<defs><linearGradient id="hs" x1="0" y1="0" x2="0" y2="1"><stop offset="0" stop-color="#eef3f9"/><stop offset="1" stop-color="#cfdae8"/></linearGradient></defs>
<rect width="1280" height="17" fill="#98b2d4"/>
<rect width="58" height="17" fill="#cddcee"/>
<path d="M5 8.500l4-3.500v7zM4 5v7M21 8.500l4-3.500v7zM32 5l4 3.500-4 3.500zM46 5l4 3.500-4 3.500zM51 5v7" fill="#3c5a86" stroke="#3c5a86" stroke-width=".8"/>
<path d="M58 0h68l-6 16H60z" fill="#f2f6fb" stroke="#8ea7c4"/>
<text x="94" y="12" text-anchor="middle" style="font-family:'Liberation Sans',sans-serif;font-size:12.500px;font-weight:bold;fill:#2d4a78">трен №2</text>
<path d="M127 16l6-16h34l-8 16z" fill="#c6d7ec" stroke="#8ea7c4"/>
<rect x="140" y="3" width="11" height="10" fill="#f4f6f8" stroke="#6d7f96"/>
<path d="M141 5l1-3 1 2 3-1-2 3z" fill="#eab33c"/>
<rect x="760" y="1" width="5" height="15" fill="#dbe6f3" stroke="#8ea7c4" stroke-width=".5"/>
<path d="M776 4l-5 4.500 5 4.500z" fill="#7d93b3"/>
<rect x="781" width="403" height="16" fill="url(#hs)"/>
<path d="M979.500 5v7M981.500 5v7M983.500 5v7M985.500 5v7" stroke="#8396ae"/>
<path d="M1249 4l5 4.500-5 4.500z" fill="#44618c"/>
<rect x="1261" y="1" width="3" height="15" fill="#e6eef7"/>
<rect y="16" width="1280" height="1" fill="#56718f"/>
</svg>

<!-- status bar -->
<svg class="abs" style="left:0;top:727px" width="1280" height="24" xmlns="http://www.w3.org/2000/svg">
<defs><linearGradient id="st" x1="0" y1="0" x2="0" y2="1"><stop offset="0" stop-color="#dbe7f6"/><stop offset=".45" stop-color="#c9dcf3"/><stop offset=".55" stop-color="#b1cbec"/><stop offset="1" stop-color="#d0e0f4"/></linearGradient>
<linearGradient id="sto" x1="0" y1="0" x2="0" y2="1"><stop offset="0" stop-color="#fbe3ae"/><stop offset="1" stop-color="#f8c86e"/></linearGradient></defs>
<rect width="1280" height="20" fill="url(#st)"/>
<rect y="20" width="1280" height="3" fill="#d8dadd"/>
<path d="M52.500 0v20M1034.500 0v20" stroke="#aec3dc"/>
<g style="font-family:'Liberation Sans',sans-serif;font-size:11.500px;fill:#3f5a84">
<text x="7" y="13" style="letter-spacing:.3px">Готово</text>
<text x="951" y="13">Количество: 3</text>
<text x="1104" y="13">100%</text>
</g>
<rect x="1041" y="1" width="56" height="18" rx="2" fill="#c0d4ec" stroke="#9fb7d6"/>
<rect x="1041.500" y="1.500" width="18" height="17" fill="url(#sto)" stroke="#d6a85c"/>
<path d="M1045.500 5.500h10v8h-10zM1045.500 8.500h10M1045.500 11h10M1049 5.500v8M1052.500 5.500v8" fill="#fff" stroke="#6a6a5a"/>
<rect x="1063.500" y="5.500" width="10" height="9" fill="#dde6f2" stroke="#556"/><rect x="1066" y="8" width="5" height="4" fill="#fff" stroke="#8a94a3"/>
<rect x="1081.500" y="4.500" width="10" height="10" fill="#fff" stroke="#556"/><path d="M1086.500 4.500v6M1082 10.500h9" stroke="#556"/><rect x="1082" y="11" width="9" height="3" fill="#9aa5b5"/>
<path d="M1155 9.500h105" stroke="#fff"/><path d="M1155 10.500h105" stroke="#91a9c8"/>
<circle cx="1149" cy="10" r="7" fill="#dbe6f3" stroke="#7d93b3"/><rect x="1145" y="9" width="8" height="2" fill="#33496b"/>
<circle cx="1267" cy="10" r="7" fill="#dbe6f3" stroke="#7d93b3"/><path d="M1263 10h8M1267 6v8" stroke="#33496b" stroke-width="2"/>
<path d="M1203.500 3.500h7v8l-3.500 3.500-3.500-3.500z" fill="#eef2f7" stroke="#6d83a2"/>
</svg>

<div id="wm">steelfactor.ru</div>
</body></html>
